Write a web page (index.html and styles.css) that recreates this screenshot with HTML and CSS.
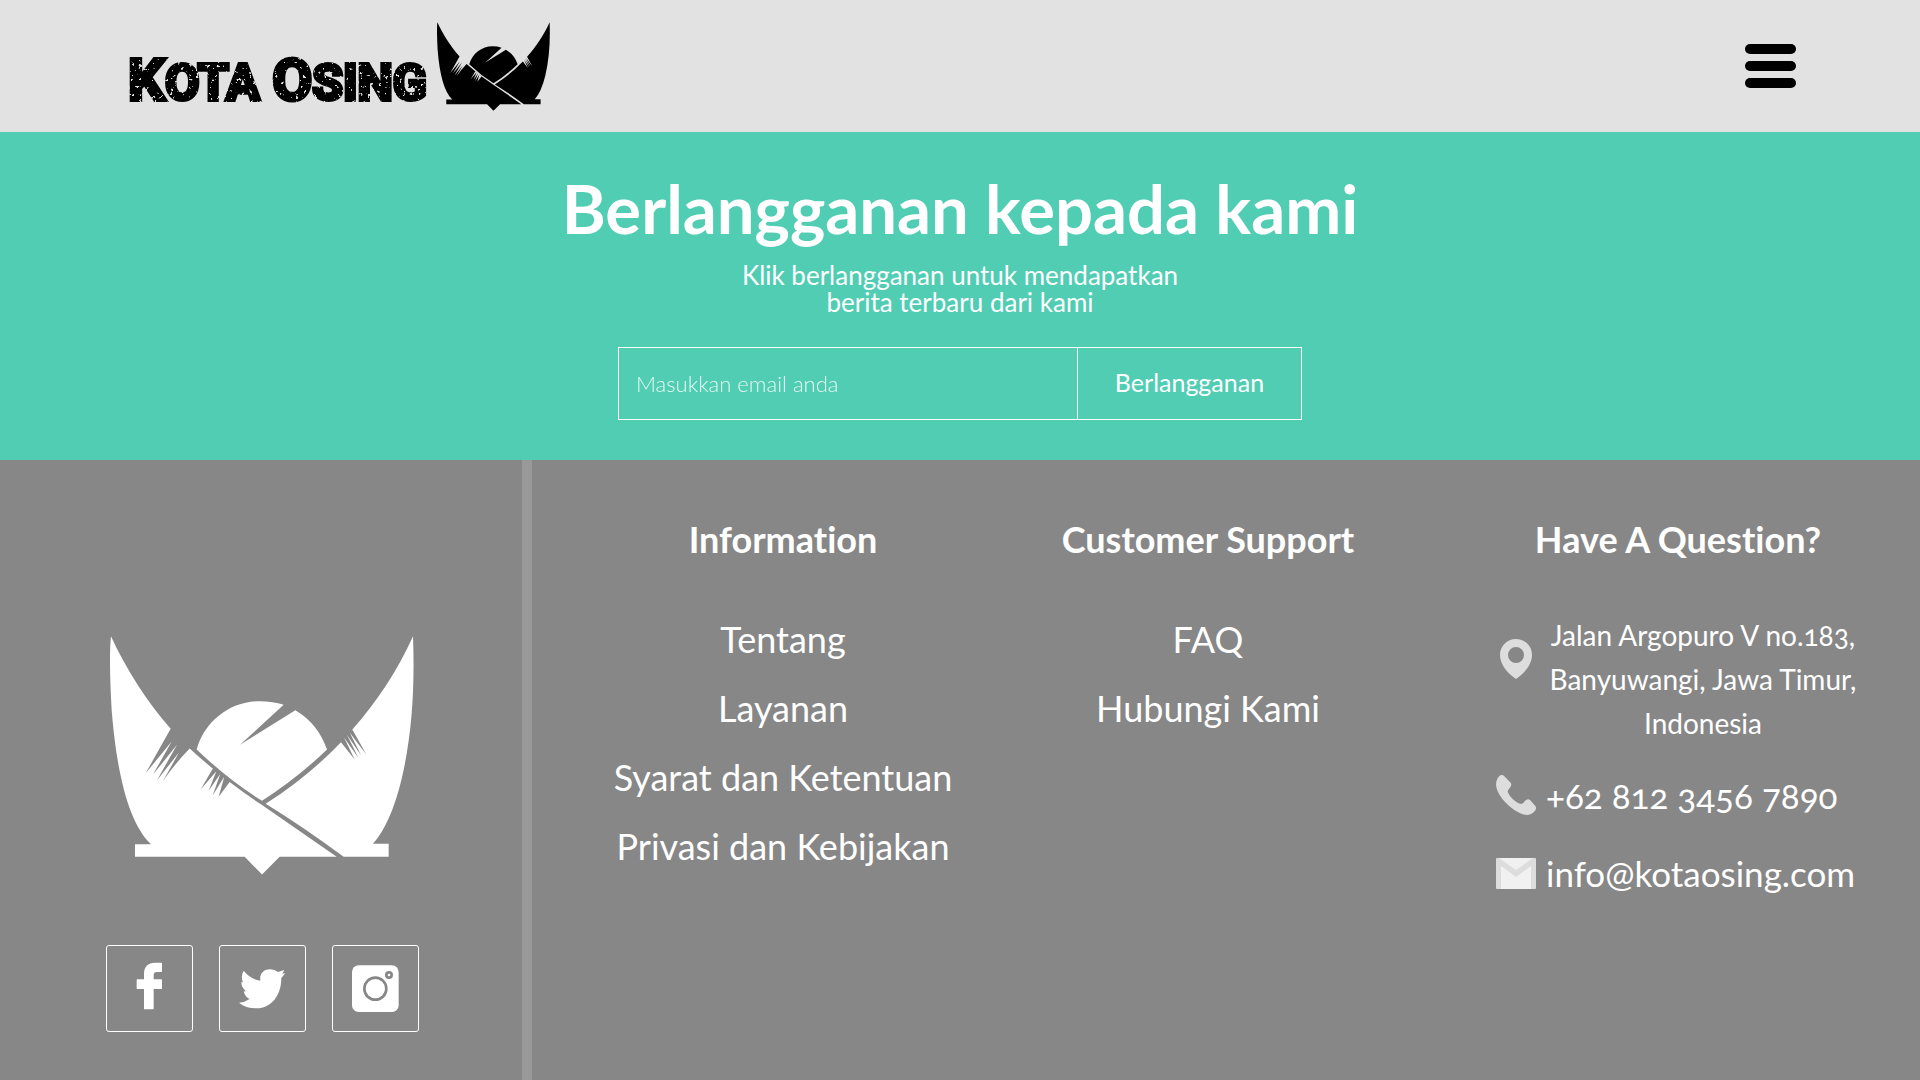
FILE: index.html
```html
<!DOCTYPE html>
<html lang="id">
<head>
<meta charset="utf-8">
<meta name="viewport" content="width=device-width, initial-scale=1">
<title>Kota Osing</title>
<link rel="stylesheet" href="styles.css">
</head>
<body>
<svg class="defs" aria-hidden="true">
  <defs>
    <filter id="worn" x="-5%" y="-5%" width="110%" height="110%">
      <feTurbulence type="fractalNoise" baseFrequency="0.28" numOctaves="3" seed="7" result="noise"/>
      <feColorMatrix in="noise" type="matrix" values="0 0 0 0 0  0 0 0 0 0  0 0 0 0 0  14 0 0 0 -9.2" result="specks"/>
      <feComposite in="SourceGraphic" in2="specks" operator="out" result="chipped"/>
    </filter>
    <symbol id="crest" viewBox="31 48 912 716">
      <path d="M34 48C78 145 143 246 213 326L138 459L216 364L160 463L232 374L172 480L238 397L189 484Q226 430 270 385Q370 477 486 554L711 710H540L487 763L435 710H106V672H154C90 612 52 470 36 270Q27 110 34 48Z"/>
      <path d="M291 388C315 302 392 243 480 243Q520 243 552 254L421 374L587 270Q655 310 682 388Q595 472 487 542Q385 478 291 388Z"/>
      <path d="M940 48C946 210 936 350 905 480Q873 610 820 671H867V710H732Q610 620 498 551Q625 470 724 366L765 418L733 352L776 413L742 344L785 407L750 337L800 403L758 328C830 247 895 149 940 48Z"/>
      <path class="crest-cut" d="M340 444L303 508L350 453L327 512L362 461L339 526L374 469L357 530L391 484Z"/>
    </symbol>
  </defs>
</svg>

<header class="topbar">
  <a class="brand" href="#">
    <span class="brand-name"><span class="cap">K</span>OTA <span class="cap">O</span>SING</span>
    <svg class="brand-mark" aria-hidden="true"><use href="#crest"/></svg>
  </a>
  <button class="menu" type="button" aria-label="Menu"><span></span><span></span><span></span></button>
</header>

<main class="subscribe">
  <h1>Berlangganan kepada kami</h1>
  <p>Klik berlangganan untuk mendapatkan<br>berita terbaru dari kami</p>
  <form class="subscribe-form">
    <input type="email" placeholder="Masukkan email anda" aria-label="Email">
    <button type="submit">Berlangganan</button>
  </form>
</main>

<footer class="footer">
  <div class="identity">
    <svg class="identity-mark" aria-hidden="true"><use href="#crest"/></svg>
    <div class="social">
      <a href="#" aria-label="Facebook"><svg viewBox="51 47 255 255"><path d="M216 99q0-2-2-2h-19c-22 0-33 13-33 34v16h-20q-2 0-2 2v25q0 2 2 2h20v59q0 2 2 2h25q2 0 2-2v-59h23q2 0 2-2v-25q0-2-2-2h-23v-13q0-9 9-9h14q2 0 2-2z"/></svg></a>
      <a href="#" aria-label="Twitter"><svg viewBox="390 47 255 255"><path d="M461 121Q482 147 511 151C508 129 522 117 541 117Q554 117 564 125L583 119L577 130L586 129L574 143C574 195 544 234 500 234Q467 234 447 217Q465 216 479 206Q466 200 461 184L467 182Q454 171 454 155L459 156Q451 139 461 121Z"/></svg></a>
      <a href="#" aria-label="Instagram"><svg viewBox="729 47 255 255"><rect x="786" y="105" width="140" height="140" rx="20"/><circle class="hole" cx="856" cy="175" r="33" stroke-width="8"/><circle class="hole" cx="897" cy="134" r="8" stroke-width="8"/></svg></a>
    </div>
  </div>

  <div class="columns">
    <nav class="column" aria-labelledby="info-title">
      <h2 id="info-title">Information</h2>
      <ul>
        <li><a href="#">Tentang</a></li>
        <li><a href="#">Layanan</a></li>
        <li><a href="#">Syarat dan Ketentuan</a></li>
        <li><a href="#">Privasi dan Kebijakan</a></li>
      </ul>
    </nav>
    <nav class="column" aria-labelledby="support-title">
      <h2 id="support-title">Customer Support</h2>
      <ul>
        <li><a href="#">FAQ</a></li>
        <li><a href="#">Hubungi Kami</a></li>
      </ul>
    </nav>
    <section class="column contact" aria-labelledby="contact-title">
      <h2 id="contact-title">Have A Question?</h2>
      <address>
        <div class="contact-row place">
          <svg viewBox="0 0 40 40" aria-hidden="true"><path fill-rule="evenodd" d="M20 0C11 0 4 7 4 16C4 25 11 34 20 40C29 34 36 25 36 16C36 7 29 0 20 0ZM20 8a8 8 0 1 1 0 16a8 8 0 0 1 0-16Z"/></svg>
          <span>Jalan Argopuro V no.183,<br>Banyuwangi, Jawa Timur,<br>Indonesia</span>
        </div>
        <div class="contact-row">
          <svg viewBox="48 528 120 120" aria-hidden="true"><path d="M61 529Q68 526 73 532L92 551Q97 558 89 567Q83 573 83 578C90 595 107 611 124 615Q130 614 134 607Q143 597 151 604L166 621Q171 628 165 635C153 650 138 650 124 644C96 633 67 606 54 579C45 561 46 540 61 529Z"/></svg>
          <a href="tel:+6281234567890">+62 812 3456 7890</a>
        </div>
        <div class="contact-row">
          <svg viewBox="0 0 40 40" aria-hidden="true"><rect y="5" width="40" height="31" rx="1"/><path class="paper" d="M3 5H37L20 17ZM5 13L20 24L35 13V36H5Z"/></svg>
          <a href="mailto:info@kotaosing.com">info@kotaosing.com</a>
        </div>
      </address>
    </section>
  </div>
</footer>
</body>
</html>
```
FILE: styles.css
```css
* { box-sizing: border-box; }

body {
  margin: 0;
  min-height: 100vh;
  display: flex;
  flex-direction: column;
  font-family: Lato, "Open Sans", sans-serif;
  font-variant-ligatures: no-common-ligatures;
  color: #fff;
}

a { color: inherit; text-decoration: none; }

.defs { position: absolute; width: 0; height: 0; }

.topbar {
  display: flex;
  justify-content: space-between;
  align-items: center;
  height: 132px;
  padding: 0 124px 0 128px;
  background: #e2e2e2;
  color: #000;
}

.brand { display: flex; align-items: center; gap: 8px; }

.brand-name {
  width: 301px;
  font-family: Roboto, sans-serif;
  font-size: 50px;
  font-weight: 700;
  line-height: 64px;
  padding-top: 30px;
  white-space: nowrap;
  -webkit-text-stroke: 4px #000;
  filter: url(#worn);
}

.brand-name .cap { font-size: 58px; }

.brand-mark { width: 113px; height: 89px; fill: #000; color: #e2e2e2; }

.crest-cut { fill: currentColor; }

.menu {
  display: flex;
  flex-direction: column;
  gap: 7px;
  padding: 0;
  border: 0;
  background: none;
}

.menu span { width: 51px; height: 10px; border-radius: 5px; background: #000; }

.subscribe {
  display: flex;
  flex-direction: column;
  align-items: center;
  padding: 38px 24px 40px;
  background: #50cdb3;
  text-align: center;
}

.subscribe h1 { margin: 0; font-size: 67px; font-weight: 700; line-height: 76px; }

.subscribe p { margin: 16px 0 31px; font-size: 26px; line-height: 27px; }

.subscribe-form { display: flex; width: 684px; max-width: 100%; height: 73px; }

.subscribe-form input,
.subscribe-form button {
  border: 1px solid #fff;
  background: none;
  color: #fff;
  font-family: inherit;
}

.subscribe-form input {
  flex: 1;
  min-width: 0;
  border-right: 0;
  border-radius: 0;
  padding: 0 17px;
  font-size: 22px;
  font-weight: 300;
}

.subscribe-form input::placeholder { color: #fff; opacity: 0.85; }

.subscribe-form button { width: 225px; padding: 0 0 4px; font-size: 25px; }

.footer { flex: 1; display: flex; background: #878787; }

.identity {
  flex: 0 0 532px;
  display: flex;
  flex-direction: column;
  align-items: center;
  justify-content: flex-end;
  gap: 70px;
  padding: 48px 0 48px 2px;
  border-right: 10px solid #999;
}

.identity-mark { width: 304px; height: 239px; fill: #fff; color: #878787; }

.social { display: flex; gap: 26px; }

.social a {
  width: 87px;
  height: 87px;
  border: 1px solid #fff;
  border-radius: 3px;
}

.social svg { display: block; fill: #fff; }

.social .hole { fill: none; stroke: #878787; }

.columns {
  flex: 1;
  display: grid;
  grid-template-columns: 502fr 348fr 538fr;
  padding-top: 59px;
}

.column { text-align: center; }

.column h2 { margin: 0 0 46px; font-size: 36px; font-weight: 700; line-height: 40px; }

.column ul {
  list-style: none;
  margin: 0;
  padding: 0;
  font-size: 36px;
  line-height: 69px;
}

.contact { padding-left: 54px; }

address {
  display: flex;
  flex-direction: column;
  width: 364px;
  margin: 0 auto;
  font-style: normal;
  font-size: 35px;
  line-height: 40px;
  font-variant-numeric: oldstyle-nums;
}

.contact-row { display: flex; align-items: center; gap: 10px; margin-top: 38px; }

.contact-row svg { flex: none; width: 40px; height: 40px; fill: #ddd; }

.contact-row .paper { fill: #f1f1f1; }

.place { align-items: flex-start; margin-top: 8px; font-size: 28px; line-height: 44px; }

.place + .contact-row { margin-top: 30px; }

.place span { flex: 1; white-space: nowrap; }

.place svg { margin-top: 26px; }
```
